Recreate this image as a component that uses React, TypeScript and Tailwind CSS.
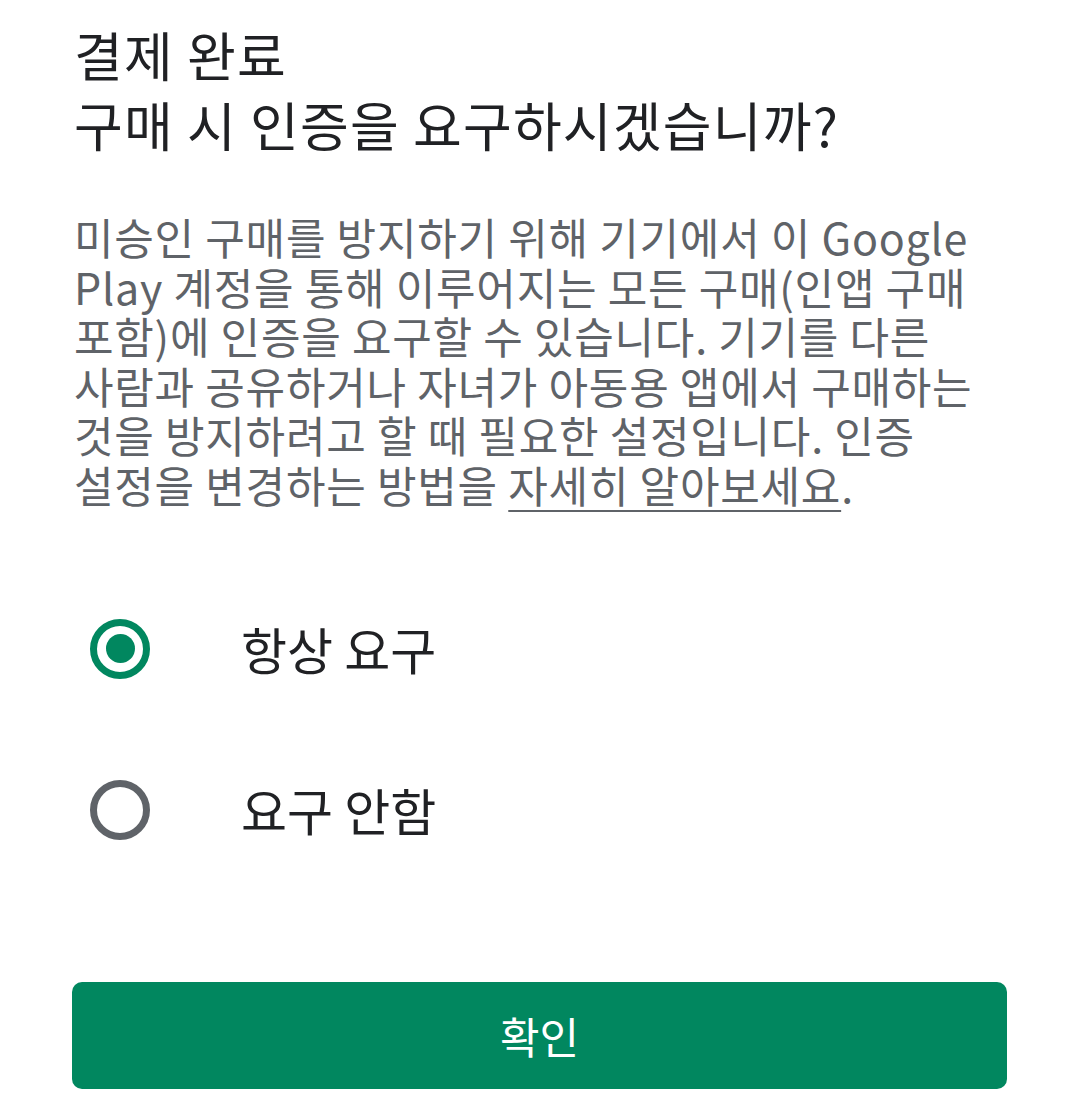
export default function App() {
  const font = { fontFamily: '"Noto Sans CJK KR", Roboto, sans-serif' };
  return (
    <div className="w-[1080px] h-[1111px] bg-white overflow-hidden" style={font}>
      <div className="px-[74px] pt-[19px]">
        <h1 className="text-[53px] leading-[70px] tracking-[1.2px] font-normal text-[#202124]">
          결제 완료
          <br />
          구매 시 인증을 요구하시겠습니까?
        </h1>

        <p className="mt-[53px] text-[43px] leading-[49.5px] tracking-[0.75px] text-[#5f6368]">
          미승인 구매를 방지하기 위해 기기에서 이 Google
          <br />
          Play 계정을 통해 이루어지는 모든 구매(인앱 구매
          <br />
          포함)에 인증을 요구할 수 있습니다. 기기를 다른
          <br />
          사람과 공유하거나 자녀가 아동용 앱에서 구매하는
          <br />
          것을 방지하려고 할 때 필요한 설정입니다. 인증
          <br />
          설정을 변경하는 방법을{" "}
          <span className="underline underline-offset-[7px] decoration-2">자세히 알아보세요</span>.
        </p>

        <div className="mt-[59px]">
          <label className="flex items-center h-[161px] pl-[16px]">
            <span className="w-[60px] h-[60px] rounded-full border-[7px] border-[#01875f] flex items-center justify-center">
              <span className="w-[29px] h-[29px] rounded-full bg-[#01875f]" />
            </span>
            <span className="ml-[91px] text-[50px] text-[#202124]">항상 요구</span>
          </label>
          <label className="flex items-center h-[161px] pl-[16px]">
            <span className="w-[60px] h-[60px] rounded-full border-[7px] border-[#5f6368]" />
            <span className="ml-[91px] text-[50px] text-[#202124]">요구 안함</span>
          </label>
        </div>

        <button className="mt-[92px] -ml-[2px] w-[935px] h-[107px] rounded-[10px] bg-[#01875f] text-white text-[43px] flex items-center justify-center">
          확인
        </button>
      </div>
    </div>
  );
}
